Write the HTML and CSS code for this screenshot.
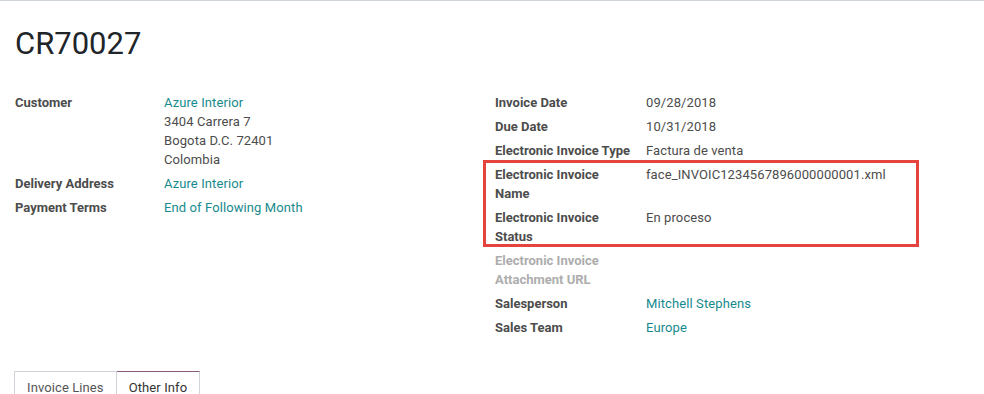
FILE: index.html
```html
<!DOCTYPE html>
<html>
<head>
<meta charset="utf-8">
<link rel="stylesheet" href="styles.css">
</head>
<body>
<div class="sheet">
  <h1 class="title">CR70027</h1>
  <div class="groups">
    <div class="group group-left">
      <div class="label">Customer</div>
      <div class="value">
        <a class="link">Azure Interior</a><br>
        3404 Carrera 7<br>
        Bogota D.C. 72401<br>
        Colombia
      </div>
      <div class="label">Delivery Address</div>
      <div class="value"><a class="link">Azure Interior</a></div>
      <div class="label">Payment Terms</div>
      <div class="value"><a class="link">End of Following Month</a></div>
    </div>
    <div class="group group-right">
      <div class="label">Invoice Date</div>
      <div class="value">09/28/2018</div>
      <div class="label">Due Date</div>
      <div class="value">10/31/2018</div>
      <div class="label">Electronic Invoice Type</div>
      <div class="value">Factura de venta</div>
      <div class="label">Electronic Invoice<br>Name</div>
      <div class="value">face_INVOIC1234567896000000001.xml</div>
      <div class="label">Electronic Invoice<br>Status</div>
      <div class="value">En proceso</div>
      <div class="label label-muted">Electronic Invoice<br>Attachment URL</div>
      <div class="value"></div>
      <div class="label">Salesperson</div>
      <div class="value"><a class="link">Mitchell Stephens</a></div>
      <div class="label">Sales Team</div>
      <div class="value"><a class="link">Europe</a></div>
      <div class="highlight"></div>
    </div>
  </div>
  <div class="tabs">
    <div class="tab">Invoice Lines</div>
    <div class="tab tab-active">Other Info</div>
  </div>
</div>
</body>
</html>
```
FILE: styles.css
```css
html, body {
  margin: 0;
  padding: 0;
  background: #ffffff;
}
body {
  font-family: Roboto, "Liberation Sans", sans-serif;
  font-size: 13px;
  line-height: 19px;
  color: #4c4c4c;
  border-top: 1px solid #ced4da;
  height: 393px;
  overflow: hidden;
}
.sheet {
  padding: 0 15px;
}
.title {
  margin: 25px 0 0 0;
  font-size: 31px;
  line-height: 36px;
  font-weight: 400;
  color: #212529;
}
.groups {
  display: flex;
  margin-top: 31px;
}
.group {
  display: grid;
  row-gap: 5px;
  align-content: start;
}
.group-left {
  width: 480px;
  grid-template-columns: 149px 1fr;
}
.group-right {
  position: relative;
  grid-template-columns: 151px 1fr;
  flex: 1;
}
.label {
  font-weight: 700;
  color: #4c4c4c;
}
.label-muted {
  color: #adadad;
}
.value {
  color: #4c4c4c;
  letter-spacing: 0.1px;
}
.link {
  color: #178a8e;
  text-decoration: none;
}
.highlight {
  position: absolute;
  left: -12px;
  top: 67px;
  width: 430px;
  height: 81px;
  border: 3px solid #e5443e;
}
.tabs {
  display: flex;
  margin-top: 34px;
  margin-left: -1px;
}
.tab {
  padding: 6px 12px 0 12px;
  border: 1px solid #ced4da;
  border-bottom: none;
  color: #555;
  height: 30px;
  letter-spacing: 0.1px;
}
.tab + .tab {
  border-left: none;
}
.tab-active {
  border-top: 1px solid #875a7b;
  color: #333;
}
```
